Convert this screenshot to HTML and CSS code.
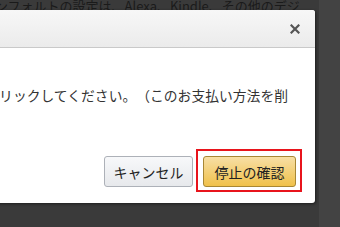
FILE: index.html
```html
<!DOCTYPE html>
<html lang="ja">
<head>
  <meta charset="UTF-8">
  <meta name="viewport" content="width=device-width, initial-scale=1.0">
  <title>お支払い方法の停止</title>
  <link rel="stylesheet" href="styles.css">
</head>
<body>
  <div class="page-text">
    <span>ンフォルトの設定は、Alexa、Kindle、その他のデジ</span>
  </div>
  <div class="modal">
    <div class="modal-header">
      <button class="close-button" aria-label="閉じる">
        <svg width="10" height="10" viewBox="0 0 10 10">
          <path d="M1.5 1.5 L8.5 8.5 M8.5 1.5 L1.5 8.5" stroke="#555" stroke-width="2.2" stroke-linecap="square"/>
        </svg>
      </button>
    </div>
    <div class="modal-body">
      <p class="message">リックしてください。（このお支払い方法を削</p>
      <div class="modal-footer">
        <button class="btn btn-cancel">キャンセル</button>
        <button class="btn btn-confirm">停止の確認<span class="highlight"></span></button>
      </div>
    </div>
  </div>
</body>
</html>
```

FILE: styles.css
```css
* {
  margin: 0;
  padding: 0;
  box-sizing: border-box;
}

body {
  font-family: 'Noto Sans CJK JP', 'Liberation Sans', sans-serif;
  text-spacing-trim: space-all;
  background: linear-gradient(to right, #3a3a3a 319px, #434343 319px);
  width: 340px;
  height: 227px;
  overflow: hidden;
}

.page-text {
  height: 10px;
  overflow: hidden;
  display: flex;
  align-items: flex-end;
  margin-left: -5px;
  font-size: 13px;
  color: #1a1a1a;
  white-space: nowrap;
}

.page-text span {
  line-height: 16px;
  margin-bottom: -4px;
}

.modal {
  margin-left: -20px;
  width: 335px;
  background-color: #fff;
  border-radius: 0 3px 3px 0;
  box-shadow: 1px 1px 3px rgba(0, 0, 0, 0.5);
}

.modal-header {
  height: 38px;
  display: flex;
  justify-content: flex-end;
  align-items: center;
  padding-right: 15px;
  background: linear-gradient(#f7f7f7, #ebebeb);
  border-bottom: 1px solid #c9c9c9;
  border-radius: 0 3px 0 0;
}

.close-button {
  background: none;
  border: none;
  width: 10px;
  height: 10px;
  display: flex;
  cursor: pointer;
  margin-top: 1px;
}

.modal-body {
  padding: 37px 19px 16px 0;
}

.message {
  font-size: 13.8px;
  line-height: 20px;
  color: #333;
  white-space: nowrap;
  text-align: right;
  padding-right: 8px;
}

.modal-footer {
  margin-top: 51px;
  display: flex;
  justify-content: flex-end;
  gap: 10px;
}

.btn {
  font-family: inherit;
  font-size: 14px;
  color: #222;
  height: 31px;
  border-radius: 3px;
  cursor: pointer;
  position: relative;
}

.btn-cancel {
  width: 89px;
  background: linear-gradient(#f7f8fa, #e7e9ec);
  border: 1px solid #adb1b8;
}

.btn-confirm {
  width: 93px;
  background: linear-gradient(#f7dfa5, #f0c14b);
  border: 1px solid #a88734;
}

/* annotation box */
.highlight {
  position: absolute;
  top: -8px;
  left: -8px;
  right: -7px;
  bottom: -6px;
  border: 2px solid #e8141c;
  pointer-events: none;
}
```
